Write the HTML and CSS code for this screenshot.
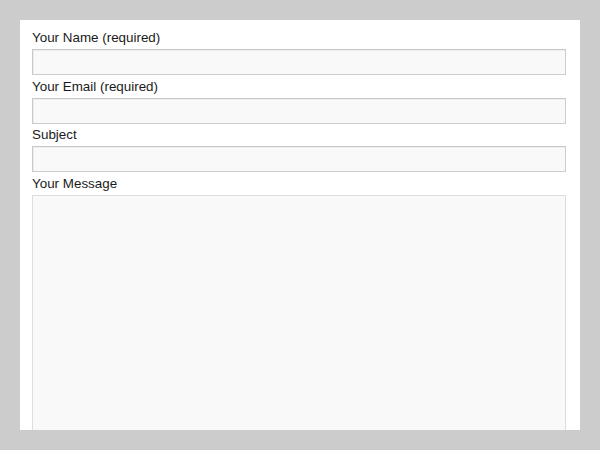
FILE: index.html
```html
<!DOCTYPE html>
<html>
<head>
<meta charset="utf-8">
<link rel="stylesheet" href="styles.css">
</head>
<body>
<div class="panel">
  <form class="form">
    <label class="label">Your Name (required)</label>
    <input class="field" type="text">
    <label class="label">Your Email (required)</label>
    <input class="field" type="text">
    <label class="label">Subject</label>
    <input class="field" type="text">
    <label class="label">Your Message</label>
    <textarea class="message"></textarea>
  </form>
</div>
</body>
</html>
```
FILE: styles.css
```css
html, body {
  margin: 0;
  padding: 0;
  height: 100%;
  background: #cccccc;
  overflow: hidden;
}
body {
  padding: 20px 20px 0 20px;
  box-sizing: border-box;
  font-family: "Liberation Sans", Arial, sans-serif;
}
.panel {
  background: #ffffff;
  height: 410px;
  padding: 7px 14px 0 12px;
  box-sizing: border-box;
  overflow: hidden;
}
.form {
  display: flex;
  flex-direction: column;
}
.label {
  display: block;
  font-size: 13.4px;
  line-height: 22px;
  color: #1a1a1a;
}
.field {
  display: block;
  box-sizing: border-box;
  width: 534px;
  height: 26px;
  margin: 0 0 0.7px 0;
  padding: 0 4px;
  background: #f9f9f9;
  border: 1px solid #cccccc;
  border-top-color: #c8c8c8;
  border-left-color: #c8c8c8;
  box-shadow: inset 1px 1px 0 #eeeeee;
  outline: none;
}
.message {
  display: block;
  box-sizing: border-box;
  width: 534px;
  height: 260px;
  margin: 0;
  background: #f9f9f9;
  border: 1px solid #dddddd;
  resize: none;
  outline: none;
}
```
